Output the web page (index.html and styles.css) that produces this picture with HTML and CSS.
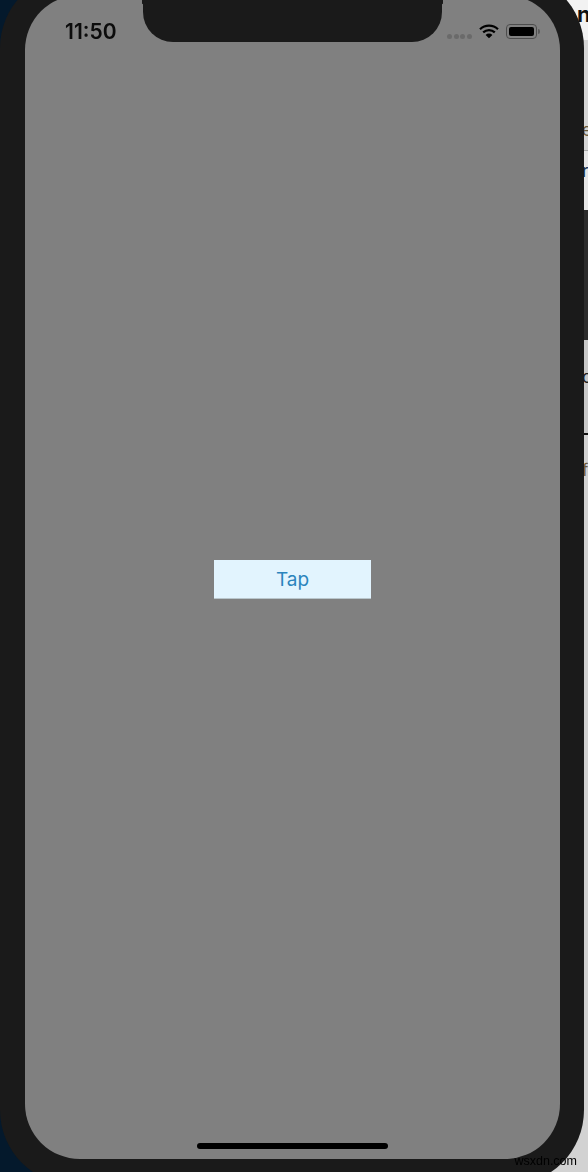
FILE: index.html
```html
<!DOCTYPE html>
<html lang="en">
<head>
    <meta charset="UTF-8">
    <meta name="viewport" content="width=device-width, initial-scale=1.0">
    <title>Simulator</title>
    <link rel="stylesheet" href="styles.css">
</head>
<body>
    <div class="desktop">
        <div class="wallpaper"></div>
        <!-- Editor window behind the simulator, only its edge shows -->
        <div class="window">
            <div class="win-title">n</div>
            <div class="win-row win-row-a"><span class="tan">e</span></div>
            <div class="win-row win-row-b"><span class="navy">r</span></div>
            <div class="win-band"></div>
            <div class="win-row win-row-c"><span>o</span></div>
            <div class="win-row win-row-d"><span class="tan">f</span></div>
        </div>
    </div>

    <div class="phone">
        <div class="screen">
            <div class="status-bar">
                <span class="time">11:50</span>
                <div class="notch"></div>
                <div class="status-icons">
                    <div class="signal">
                        <span class="dot"></span>
                        <span class="dot"></span>
                        <span class="dot"></span>
                        <span class="dot"></span>
                    </div>
                    <svg class="wifi" width="20" height="15" viewBox="0 0 20 15">
                        <path d="M1 5.2a13 13 0 0 1 18 0" fill="none" stroke="#000" stroke-width="2.2"/>
                        <path d="M4.2 8.4a8.4 8.4 0 0 1 11.6 0" fill="none" stroke="#000" stroke-width="2.2"/>
                        <path d="M6.6 10.9 10 14.3l3.4-3.4a4.8 4.8 0 0 0-6.8 0z" fill="#000"/>
                    </svg>
                    <div class="battery"><div class="battery-fill"></div></div>
                    <div class="battery-cap"></div>
                </div>
            </div>
            <div class="content">
                <button class="tap-btn">Tap</button>
            </div>
            <div class="home-indicator"></div>
        </div>
    </div>

    <div class="watermark">wsxdn.com</div>
</body>
</html>
```

FILE: styles.css
```css
* {
    box-sizing: border-box;
}

html, body {
    height: 100%;
}

body {
    margin: 0;
    position: relative;
    overflow: hidden;
    font-family: Inter, 'Liberation Sans', sans-serif;
    background-color: #e4e4e4;
}

.desktop {
    display: flex;
    height: 100%;
}

.wallpaper {
    width: 300px;
    background-color: #04192c;
}

.window {
    flex: 1;
    display: flex;
    flex-direction: column;
    background-color: #e2e2e2;
    overflow: hidden;
}

.win-title {
    height: 40px;
    padding-left: 277px;
    background-color: #f2f2f2;
    font-weight: 700;
    font-size: 22px;
    line-height: 28px;
    color: #111;
}

.win-row {
    padding-left: 282px;
    font-size: 17px;
    line-height: 22px;
    color: #222;
}

.win-row-a {
    height: 110px;
    padding-top: 79px;
    background-color: #d6d6d6;
}

.win-row-b {
    height: 60px;
    padding-top: 9px;
    background-color: #e6e6e6;
    border-top: 1px solid #aaa;
}

.win-band {
    height: 130px;
    background-color: #2c2c2c;
}

.win-row-c {
    height: 95px;
    padding-top: 26px;
    background-color: #c9c9c9;
    border-bottom: 2px solid #111;
}

.win-row-d {
    flex: 1;
    padding-top: 24px;
    background-color: #d2d2d2;
}

.tan {
    color: #6b5a3c;
}

.navy {
    color: #1d3550;
}

/* Simulator sits on top of the desktop */
.phone {
    position: absolute;
    left: 0;
    top: -27px;
    width: 584px;
    height: 1212px;
    padding: 22px 24px 26px 25px;
    background-color: #1a1a1a;
    border-radius: 75px;
    filter: blur(0.4px);
}

.screen {
    position: relative;
    display: flex;
    flex-direction: column;
    height: 100%;
    background-color: #808080;
    border-radius: 55px;
    overflow: hidden;
}

.status-bar {
    display: flex;
    align-items: flex-start;
    height: 47px;
    flex-shrink: 0;
}

.time {
    width: 118px;
    padding: 25px 0 0 40px;
    font-size: 21px;
    line-height: 24px;
    font-weight: 600;
    color: #0c0c0c;
    white-space: nowrap;
}

.notch {
    position: relative;
    width: 299px;
    height: 47px;
    background-color: #1a1a1a;
    border-radius: 0 0 30px 30px;
}

/* little flares where the notch meets the top of the screen */
.notch::before, .notch::after {
    content: "";
    position: absolute;
    top: 0;
    width: 6px;
    height: 14px;
}

.notch::before {
    left: -6px;
    background: radial-gradient(6px 14px at 0 100%, transparent 97%, #1a1a1a 100%);
}

.notch::after {
    right: -6px;
    background: radial-gradient(6px 14px at 100% 100%, transparent 97%, #1a1a1a 100%);
}

.status-icons {
    display: flex;
    align-items: center;
    padding: 29px 0 0 5px;
}

.signal {
    display: flex;
    gap: 1.5px;
    margin-right: 7px;
    padding-top: 10px;
}

.dot {
    width: 5px;
    height: 5px;
    border-radius: 50%;
    background-color: #6a6a6a;
}

.wifi {
    margin-right: 7px;
}

.battery {
    width: 31px;
    height: 15px;
    padding: 2px;
    border: 1px solid #4c4c4c;
    border-radius: 4px;
}

.battery-fill {
    height: 100%;
    background-color: #000;
    border-radius: 2px;
}

.battery-cap {
    width: 2px;
    height: 5px;
    margin-left: 1px;
    background-color: #5a5a5a;
    border-radius: 0 2px 2px 0;
}

.content {
    flex: 1;
    display: flex;
    justify-content: center;
    padding-top: 518px;
}

.tap-btn {
    width: 157px;
    height: 39px;
    padding: 0;
    border: none;
    border-bottom: 1px solid #b9c6cc;
    background-color: #e2f4fe;
    color: #2b84bd;
    font-family: Inter, 'Liberation Sans', sans-serif;
    font-size: 19px;
}

.home-indicator {
    position: absolute;
    left: 172px;
    bottom: 10px;
    width: 191px;
    height: 6px;
    background-color: #000;
    border-radius: 3px;
}

.watermark {
    position: absolute;
    right: 11px;
    bottom: 3px;
    font-family: 'Liberation Sans', sans-serif;
    font-size: 12.5px;
    line-height: 16px;
    color: #000;
}
```
